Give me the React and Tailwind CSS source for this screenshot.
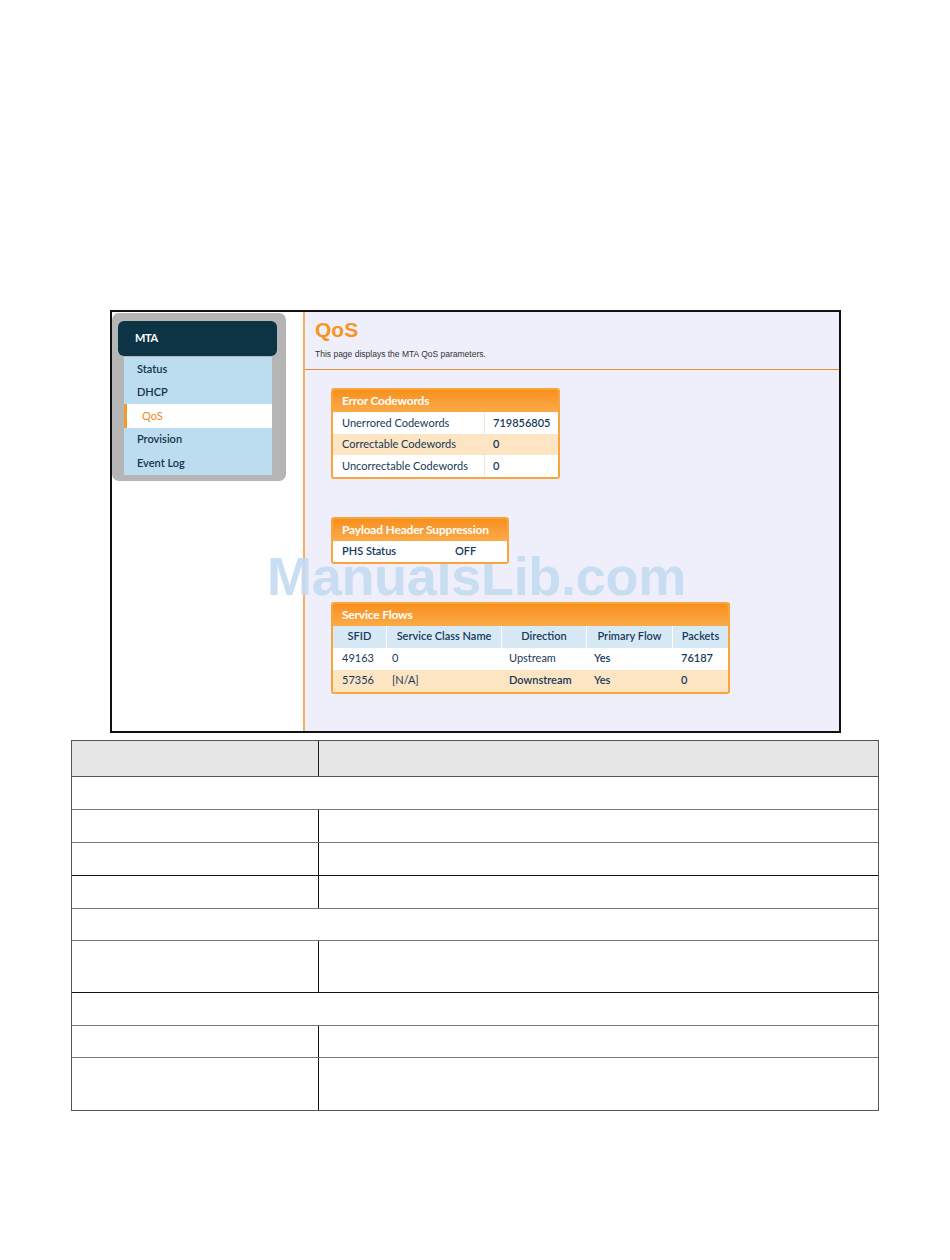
import React from 'react';

const navItems = ['Status', 'DHCP', 'QoS', 'Provision', 'Event Log'];

const errorRows = [
  ['Unerrored Codewords', '719856805'],
  ['Correctable Codewords', '0'],
  ['Uncorrectable Codewords', '0'],
];

const flows = [
  ['49163', '0', 'Upstream', 'Yes', '76187'],
  ['57356', '[N/A]', 'Downstream', 'Yes', '0'],
];

const bottomRows = [
  { span: true, h: 'h-[33px]' },
  { h: 'h-[33px]' },
  { h: 'h-[33px]' },
  { h: 'h-[33px]' },
  { span: true, h: 'h-[32px]' },
  { h: 'h-[52px]' },
  { span: true, h: 'h-[33px]' },
  { h: 'h-[32px]' },
  { h: 'h-[52px]' },
];

function BoxHeader({ title }) {
  return (
    <div className="h-[22px] bg-gradient-to-b from-[#f7901a] to-[#fbaa48] px-[9px] flex items-center text-white font-bold text-[12px] tracking-[-0.2px]">
      {title}
    </div>
  );
}

export default function App() {
  return (
    <div className="w-[950px] h-[1260px] bg-white font-['Lato','Open_Sans',sans-serif] relative">
      <div className="h-[310px]" />

      {/* screenshot frame */}
      <div className="ml-[110px] w-[731px] h-[423px] border-2 border-[#111] flex">
        {/* sidebar */}
        <div className="w-[191px] h-full bg-white pt-[1px]">
          <div className="w-[174px] h-[168px] bg-[#b5b5b5] rounded-[7px] pt-[8px] pl-[6px]">
            <div className="w-[159px] h-[35px] bg-[#0c3444] rounded-[6px] flex items-center pl-[17px] text-white font-bold text-[11px] tracking-[-0.3px]">
              MTA
            </div>
            <div className="ml-[6px] w-[148px] mt-[1px] bg-[#bcdcf0]">
              {navItems.map((n) => (
                <div
                  key={n}
                  className={
                    n === 'QoS'
                      ? 'h-[23.6px] flex items-center pl-[15px] bg-white text-[#f08a20] text-[11px] border-l-[3px] border-[#f59a2a]'
                      : 'h-[23.6px] flex items-center pl-[13px] text-[#16344a] font-semibold text-[11px]'
                  }
                >
                  {n}
                </div>
              ))}
            </div>
          </div>
        </div>

        {/* content */}
        <div className="flex-1 h-full bg-[#efeffb] border-l-[2px] border-l-[#f3b060]">
          <div className="h-[57px] pl-[10px] pt-[5px] font-['Liberation_Sans',Arial,sans-serif]">
            <div className="text-[#f7941d] font-bold text-[21px] leading-[26px]">QoS</div>
            <div className="text-[#333] text-[8.5px] mt-[5px]">This page displays the MTA QoS parameters.</div>
          </div>
          <div className="h-[1px] bg-[#ea8a2c]" />

          <div className="pl-[26px]">
            {/* Error Codewords */}
            <div className="mt-[18px] w-[229px] border-2 border-[#f9a53c] rounded-[3px] overflow-hidden bg-white">
              <BoxHeader title="Error Codewords" />
              {errorRows.map((r, i) => (
                <div key={r[0]} className={`flex h-[21.5px] items-center text-[11px] text-[#173a5a] ${i === 1 ? 'bg-[#fde4c2]' : 'bg-white'}`}>
                  <div className="w-[152px] pl-[9px] h-full flex items-center border-r border-[#f3e6d6]">{r[0]}</div>
                  <div className="pl-[8px] font-semibold">{r[1]}</div>
                </div>
              ))}
            </div>

            {/* PHS */}
            <div className="mt-[38px] w-[178px] border-2 border-[#f9a53c] rounded-[3px] overflow-hidden bg-white relative z-10">
              <BoxHeader title="Payload Header Suppression" />
              <div className="flex h-[21px] items-center text-[11px] text-[#173a5a] font-semibold">
                <div className="w-[122px] pl-[9px]">PHS Status</div>
                <div>OFF</div>
              </div>
            </div>

            {/* Service Flows */}
            <div className="mt-[38px] w-[399px] border-2 border-[#f9a53c] rounded-[3px] overflow-hidden bg-white relative z-10">
              <BoxHeader title="Service Flows" />
              <div className="flex h-[22px] items-center bg-[#d8e9f6] text-[11px] text-[#173a5a] font-semibold">
                <div className="w-[53px] text-center">SFID</div>
                <div className="w-[115px] h-full flex items-center justify-center border-l border-white">Service Class Name</div>
                <div className="w-[85px] h-full flex items-center justify-center border-l border-white">Direction</div>
                <div className="w-[86px] h-full flex items-center justify-center border-l border-white">Primary Flow</div>
                <div className="flex-1 h-full flex items-center justify-center border-l border-white">Packets</div>
              </div>
              {flows.map((f, i) => (
                <div key={f[0]} className={`flex h-[22px] items-center text-[11px] text-[#173a5a] ${i === 1 ? 'bg-[#fde4c2]' : 'bg-white'}`}>
                  <div className="w-[53px] pl-[9px]">{f[0]}</div>
                  <div className="w-[115px] pl-[6px]">{f[1]}</div>
                  <div className={`w-[85px] pl-[8px] ${i === 1 ? 'font-semibold' : ''}`}>{f[2]}</div>
                  <div className="w-[86px] pl-[8px] font-semibold">{f[3]}</div>
                  <div className="flex-1 pl-[9px] font-semibold">{f[4]}</div>
                </div>
              ))}
            </div>
          </div>
        </div>
      </div>

      {/* watermark */}
      <div className="absolute left-[267px] top-[549px] text-[54px] font-bold tracking-[-0.3px] text-[#c4daf2] opacity-90 font-['Liberation_Sans',Arial,sans-serif] leading-none pointer-events-none">
        ManualsLib.com
      </div>

      {/* bottom table */}
      <div className="ml-[71px] mt-[7px] w-[808px] border border-[#555]">
        <div className="flex h-[36px] bg-[#e6e6e6] border-b border-[#555]">
          <div className="w-[247px] border-r border-[#222]" />
          <div className="flex-1" />
        </div>
        {bottomRows.map((r, i) => (
          <div
            key={i}
            className={`flex ${r.h} ${i < bottomRows.length - 1 ? (i % 3 === 2 ? 'border-b border-[#111]' : 'border-b border-[#777]') : ''}`}
          >
            {r.span ? (
              <div className="flex-1" />
            ) : (
              <>
                <div className="w-[247px] border-r border-[#111]" />
                <div className="flex-1" />
              </>
            )}
          </div>
        ))}
      </div>
    </div>
  );
}
